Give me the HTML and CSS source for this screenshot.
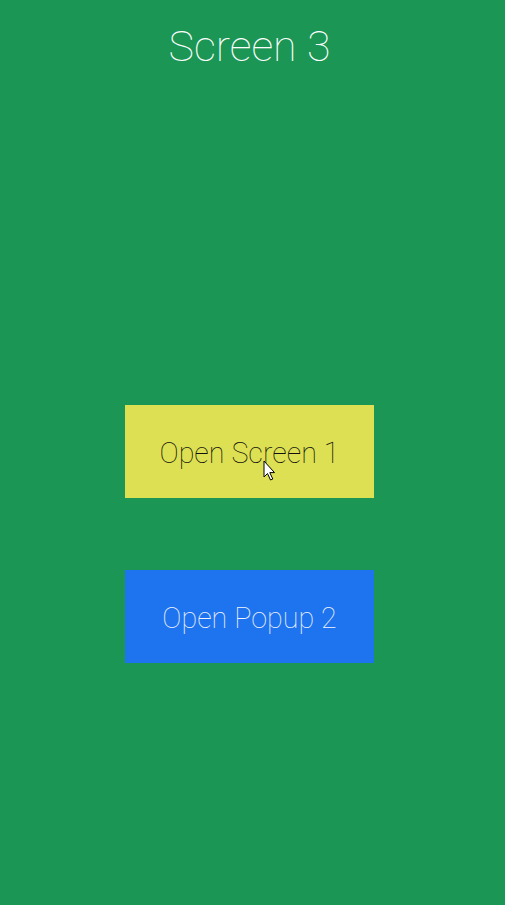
FILE: index.html
```html
<!DOCTYPE html>
<html>
<head>
<meta charset="utf-8">
<link rel="stylesheet" href="styles.css">
</head>
<body>
<div class="screen">
  <h1 class="title">Screen 3</h1>
  <div class="buttons">
    <div class="btn btn-yellow">Open Screen 1
      <svg class="cursor" width="14" height="22" viewBox="0 0 14 22"><path d="M1 1 L1 17 L4.5 13.5 L7.5 20 L9.8 19 L6.8 12.6 L11.5 12.6 Z" fill="#fff" stroke="#000" stroke-width="1" stroke-linejoin="round"/></svg>
    </div>
    <div class="btn btn-blue">Open Popup 2</div>
  </div>
</div>
</body>
</html>
```
FILE: styles.css
```css
html, body {
  margin: 0;
  padding: 0;
  background: #1b9655;
}
.screen {
  width: 499px;
  height: 905px;
  display: flex;
  flex-direction: column;
  align-items: center;
  font-family: Roboto, "Liberation Sans", sans-serif;
  font-weight: 100;
}
.title {
  margin: 21px 0 0 0;
  font-size: 43px;
  font-weight: 100;
  line-height: 50px;
  color: #fff;
}
.buttons {
  margin-top: 334px;
  display: flex;
  flex-direction: column;
  gap: 72px;
}
.btn {
  position: relative;
  width: 249px;
  height: 93px;
  display: flex;
  align-items: center;
  justify-content: center;
  font-size: 28.7px;
  font-weight: 100;
  box-sizing: border-box;
  padding-top: 3px;
}
.btn-yellow {
  background: #dde052;
  color: #111;
}
.btn-blue {
  background: #1e73ee;
  color: #f0f4ff;
}
.cursor {
  position: absolute;
  left: 138px;
  top: 55px;
}
```
